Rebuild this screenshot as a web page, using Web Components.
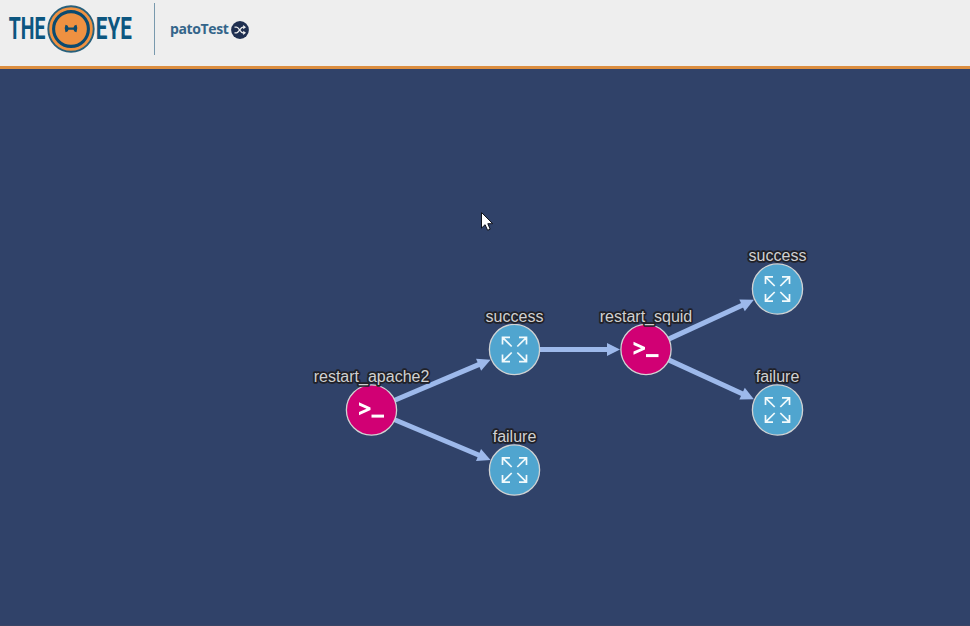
<!DOCTYPE html>
<html lang="en">
<head>
<meta charset="utf-8">
<title>patoTest</title>
<style>
html,body{margin:0;height:100%;overflow:hidden;background:#304269}
</style>
</head>
<body>
<workflow-app></workflow-app>
<script>
const define = (name, html, init) => customElements.define(name, class extends HTMLElement {
  constructor() {
    super();
    this.attachShadow({ mode: 'open' });
  }
  connectedCallback() {
    this.shadowRoot.innerHTML = html;
    if (init) init(this, this.shadowRoot);
  }
});

define('eye-logo', `
<style>:host{display:block;width:124px;height:50px}svg{display:block;overflow:visible}
text{font:700 31px Roboto,"Liberation Sans",sans-serif;fill:#0c5680}</style>
<svg width="130" height="50" viewBox="8 4 130 50">
  <text x="8.7" y="39.4" textLength="36.6" lengthAdjust="spacingAndGlyphs">THE</text>
  <text x="95.8" y="39.4" textLength="36" lengthAdjust="spacingAndGlyphs">EYE</text>
  <circle cx="71" cy="29" r="22.7" fill="#ef9141" stroke="#27607c" stroke-width="1.9"/>
  <circle cx="71" cy="29" r="17.4" fill="#ef9141" stroke="#0b4a70" stroke-width="3.1"/>
  <path d="M65.5 24.8 Q68 24.8 68.5 27.4 H73.5 Q74 24.8 76.5 24.8 Q78.3 28.5 76.5 32.2 Q74 32.2 73.5 29.8 H68.5 Q68 32.2 65.5 32.2 Q63.7 28.5 65.5 24.8Z" fill="#0d4b6d"/>
</svg>`);

define('shuffle-badge', `
<style>:host{display:block;width:18px;height:18px}svg{display:block}</style>
<svg width="18" height="18" viewBox="0 0 18 18">
  <circle cx="9" cy="9" r="8.9" fill="#1f2f50"/>
  <g fill="none" stroke="#eee" stroke-width="1.3"><path d="M3.5 6.2H5.5C8 6.2 9.2 11.8 12 11.8H13M3.5 11.8H5.5C8 11.8 9.2 6.2 12 6.2H13"/></g>
  <path d="M12.2 4.1L15 6.2L12.2 8.3ZM12.2 9.7L15 11.8L12.2 13.9Z" fill="#eee"/>
</svg>`);

define('app-header', `
<style>
:host{display:flex;box-sizing:border-box;height:69px;padding:3px 8px 0;background:#eee;border-bottom:3px solid #dc8e40}
eye-logo{margin-top:1px}
.crumb{display:flex;align-items:center;box-sizing:border-box;height:52px;margin-left:22px;padding-left:15px;border-left:1px solid #7899ad;
font:700 14px/20px "Open Sans",sans-serif;color:#34658a}
.name{width:61px;letter-spacing:-.38px;white-space:nowrap}
shuffle-badge{margin-top:2px}
</style>
<eye-logo></eye-logo><div class="crumb"><span class="name"><slot></slot></span><shuffle-badge></shuffle-badge></div>`);

const icons = {
  script: '<path d="M-12.5 -7.7L-1 -2.6V.1L-12.5 5.2V1.9L-5 -1.2L-12.5 -4.4Z" fill="#fff"/><rect x="0" y="4.6" width="12.5" height="3" fill="#fff"/>',
  event: '<g fill="none" stroke="#f2fafc" stroke-width="1.7"><path d="M-12 -5V-12.2H-4.5M-12 -12.2L-2.8 -3M4.5 -12.2H12V-5M12 -12.2L2.8 -3M-12 5V12.2H-4.5M-12 12.2L-2.8 3M4.5 12.2H12V5M12 12.2L2.8 3"/></g>'
};
define('graph-node', `
<style>
:host{position:absolute;display:block;width:0;height:0}
svg{display:block;overflow:visible}
text{font:16px "Liberation Sans",Arial,sans-serif;fill:#d0d1d3;stroke:#202128;stroke-width:3.4px;stroke-linejoin:round;paint-order:stroke;text-anchor:middle}
</style>
<svg width="1" height="1"><g class="body"><circle r="25.1" stroke="#d1d3d4" stroke-width="1.3"/><g class="icon"></g><text y="-28"></text></g></svg>`,
(el, root) => {
  const kind = el.getAttribute('kind');
  const x = +el.getAttribute('x'), y = +el.getAttribute('y');
  el.style.left = Math.floor(x) + 'px';
  el.style.top = Math.floor(y) + 'px';
  // Half-pixel centres are kept inside the SVG, where they are not snapped.
  root.querySelector('.body').setAttribute('transform', `translate(${x % 1} ${y % 1})`);
  root.querySelector('circle').setAttribute('fill', kind === 'script' ? '#d10074' : '#50a5cf');
  root.querySelector('.icon').innerHTML = icons[kind];
  root.querySelector('text').textContent = el.getAttribute('label');
});

define('graph-edges', `
<style>:host{position:absolute;inset:0;display:block}svg{display:block}</style>
<svg width="970" height="557"></svg>`,
(el, root) => {
  const links = [[371.5,341,514.5,280.5],[371.5,341,514.5,401],[514.5,280.5,646,280.5],[646,280.5,777.5,220],[646,280.5,777.5,341]];
  root.querySelector('svg').innerHTML = links.map(([a,b,c,d]) => {
    const length = Math.hypot(c-a,d-b), angle = Math.atan2(d-b,c-a)*180/Math.PI;
    return `<g transform="translate(${a} ${b}) rotate(${angle})" fill="#9db9eb"><rect x="20" y="-2.5" width="${length-57}" height="5"/><path d="M${length-39} -6.5L${length-26} 0L${length-39} 6.5Z"/></g>`;
  }).join('');
});

define('mouse-pointer', `
<style>:host{position:absolute;left:481px;top:143px;display:block}svg{display:block}</style>
<svg width="13" height="20"><path d="M.5 .5V16.1L4.1 12.7L6.6 18.3L9.2 17.2L6.8 11.7H11.7Z" fill="#fff" stroke="#10141d"/></svg>`);

define('workflow-graph', `
<style>:host{display:block;position:relative;flex:1;background:#304269;overflow:hidden;border-bottom:1px solid #394565}</style>
<graph-edges></graph-edges><slot></slot><mouse-pointer></mouse-pointer>`);

define('workflow-app', `
<style>:host{display:flex;flex-direction:column;height:100vh}app-header{flex:none}</style>
<app-header>patoTest</app-header>
<workflow-graph>
  <graph-node kind="script" x="371.5" y="341" label="restart_apache2"></graph-node>
  <graph-node kind="event" x="514.5" y="280.5" label="success"></graph-node>
  <graph-node kind="event" x="514.5" y="401" label="failure"></graph-node>
  <graph-node kind="script" x="646" y="280.5" label="restart_squid"></graph-node>
  <graph-node kind="event" x="777.5" y="220" label="success"></graph-node>
  <graph-node kind="event" x="777.5" y="341" label="failure"></graph-node>
</workflow-graph>`);
</script>
</body>
</html>
